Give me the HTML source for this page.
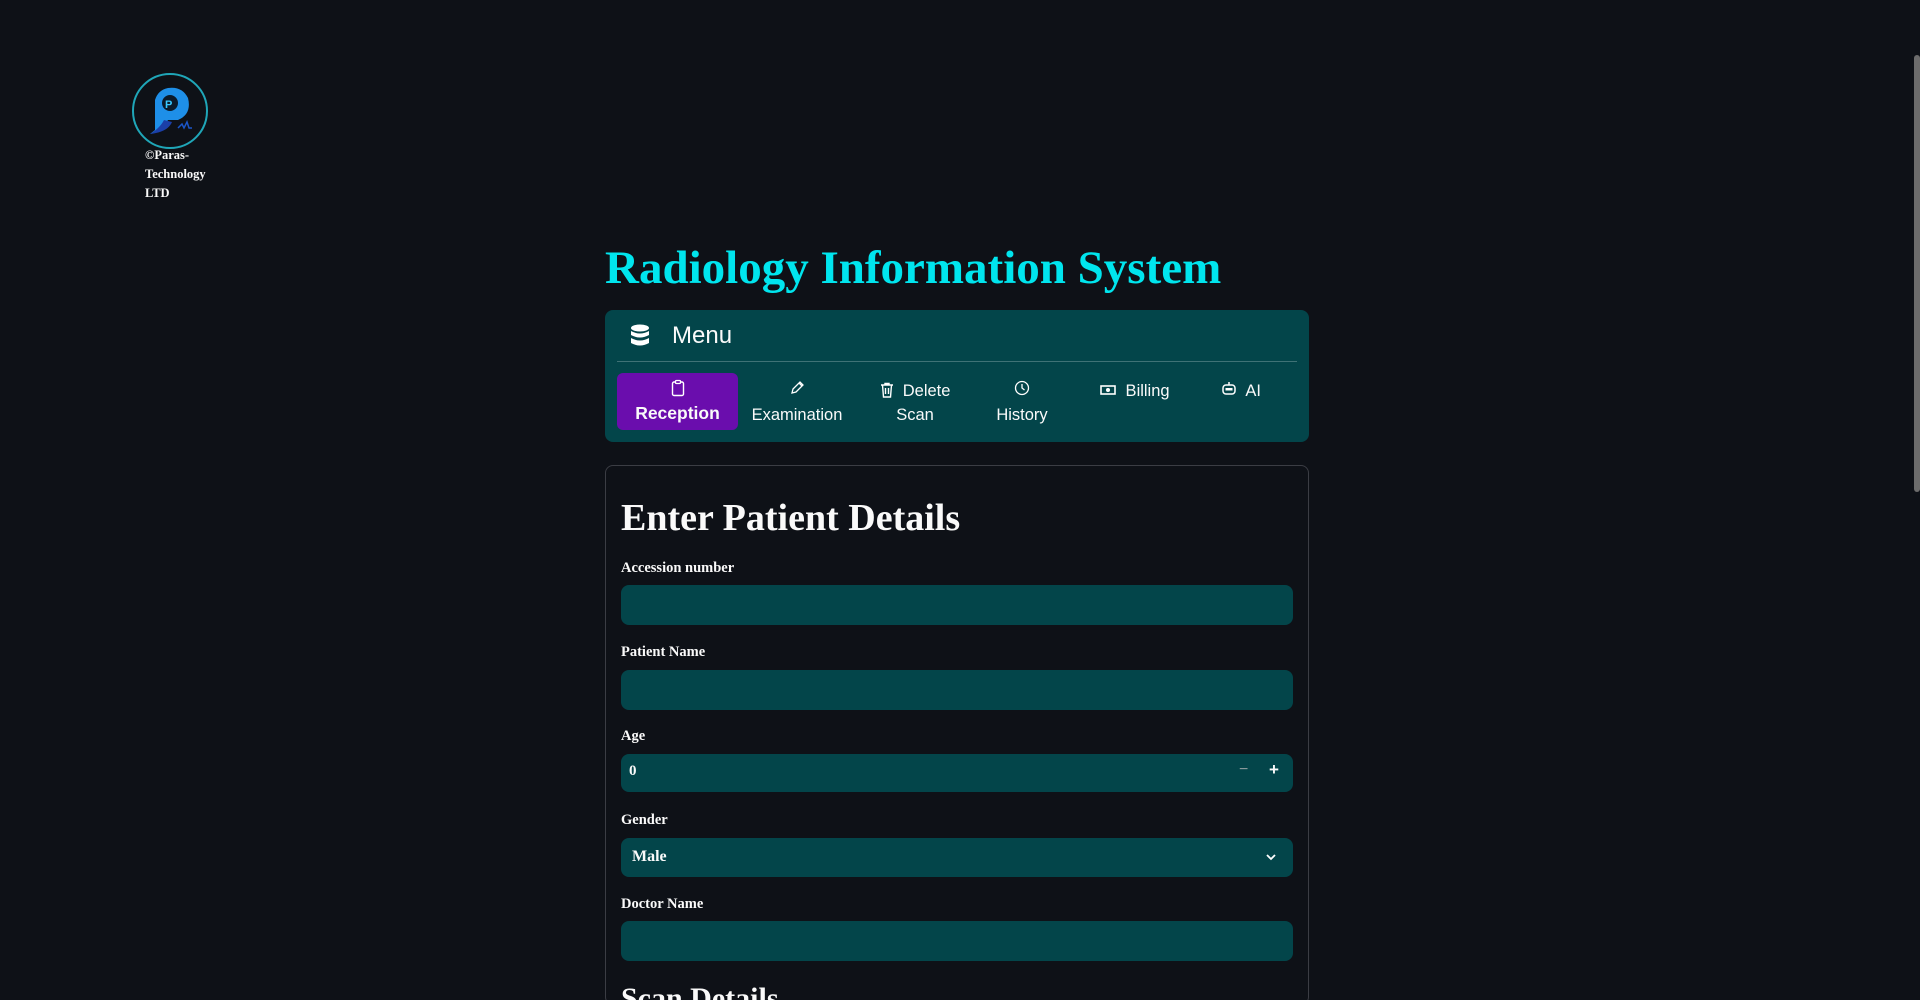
<!DOCTYPE html>
<html><head><meta charset="utf-8"><style>
*{box-sizing:border-box;margin:0;padding:0}
html,body{width:1920px;height:1000px;overflow:hidden}
body{background:#0e1117;position:relative;font-family:"Liberation Serif",serif;color:#fafafa}
.abs{position:absolute}
.logo-t{left:145px;top:146px;font-size:12.5px;font-weight:bold;line-height:19px;font-family:"Liberation Serif",serif}
h1{position:absolute;left:605px;top:241px;font-size:47px;color:#00e5ee;font-weight:bold;font-family:"Liberation Serif",serif;white-space:nowrap}
.menu{left:605px;top:310px;width:704px;height:132px;background:#03454a;border-radius:8px}
.menu .ttl{position:absolute;left:67px;top:12px;font-family:"Liberation Sans",sans-serif;font-size:24px}
.menu .div{position:absolute;left:12px;right:12px;top:51px;height:1px;background:#3f7276}
.item{position:absolute;top:63px;height:57px;text-align:center;font-family:"Liberation Sans",sans-serif;font-size:16.5px;line-height:24px}
.sel{background:#6a0dad;border-radius:6px;font-weight:bold;font-size:17.5px}
.form{left:605px;top:465px;width:704px;height:540px;border:1px solid #3b3d44;border-radius:8px}
.h2{left:621px;top:496px;font-size:38px;font-weight:bold;font-family:"Liberation Serif",serif;white-space:nowrap}
.lbl{left:621px;font-size:14.5px;font-weight:bold}
.inp{left:621px;width:672px;height:40px;background:#03454a;border-radius:8px}
</style></head><body>
<svg class="abs" style="left:128px;top:70px" width="84" height="84" viewBox="0 0 84 84">
<circle cx="42" cy="41" r="37" fill="none" stroke="#1fa6b8" stroke-width="2"/>
<path d="M22 64 Q34 60 40 50 L50 50 Q64 44 60 28 Q54 16 40 18 Q30 20 27 30 L27 60 Z" fill="#1e8fe8"/>
<path d="M22 64 Q40 62 44 52 L36 50 Q32 58 22 64Z" fill="#1b3fa8"/>
<circle cx="42" cy="33" r="8" fill="#0b1a2a"/>
<text x="37" y="38" font-size="11" font-weight="bold" fill="#38c8ff" font-family="Liberation Sans">P</text>
<path d="M50 58 l4 -4 l2 4 l3 -6 l2 6 l3 0" fill="none" stroke="#1b55c8" stroke-width="1.5"/>
</svg>
<div class="abs logo-t">©Paras-<br>Technology<br>LTD</div>
<h1>Radiology Information System</h1>
<div class="abs menu">
<svg class="abs" style="left:25px;top:14px" width="20" height="24" viewBox="0 0 20 24"><ellipse cx="10" cy="4" rx="9" ry="3.5" fill="#fff"/><path d="M1 7 Q10 12 19 7 L19 11 Q10 16 1 11Z M1 14 Q10 19 19 14 L19 19 Q10 24 1 19Z" fill="#fff"/></svg>
<div class="ttl">Menu</div>
<div class="div"></div>
<div class="item sel" style="left:12px;width:121px"><svg width="14" height="18" viewBox="0 0 14 18" style="margin-top:6px"><rect x="1.5" y="3" width="11" height="13.5" rx="1.5" fill="none" stroke="#fff" stroke-width="1.4"/><rect x="4.5" y="1.5" width="5" height="3" rx="1" fill="#6a0dad" stroke="#fff" stroke-width="1.3"/></svg><br><span style="position:relative;top:-2px">Reception</span></div>
<div class="item" style="left:135px;width:114px"><svg width="16" height="16" viewBox="0 0 16 16" style="margin-top:7px"><path d="M3 13 L4 9 L11 2 L14 5 L7 12 Z M10 3 L13 6" fill="none" stroke="#fff" stroke-width="1.3"/></svg><br><span style="position:relative;top:0px">Examination</span></div>
<div class="item" style="left:255px;width:110px;line-height:24px;padding-top:6px"><svg width="14" height="16" viewBox="0 0 14 16" style="vertical-align:-2px"><path d="M1 3H13M5 3V1.5H9V3M2.5 3L3.5 15H10.5L11.5 3M5.5 6V12M8.5 6V12" fill="none" stroke="#fff" stroke-width="1.4"/></svg>&nbsp; Delete<br>Scan</div>
<div class="item" style="left:362px;width:110px"><svg width="16" height="16" viewBox="0 0 16 16" style="margin-top:7px"><circle cx="8" cy="8" r="6.5" fill="none" stroke="#fff" stroke-width="1.3"/><path d="M8 4 V8 L10.5 10" fill="none" stroke="#fff" stroke-width="1.3"/></svg><br><span style="position:relative;top:0px">History</span></div>
<div class="item" style="left:475px;width:110px;padding-top:6px"><svg width="16" height="12" viewBox="0 0 16 12"><rect x="1" y="2" width="14" height="8" fill="none" stroke="#fff" stroke-width="1.6"/><circle cx="8" cy="6" r="2" fill="#fff"/></svg>&nbsp; Billing</div>
<div class="item" style="left:581px;width:110px;padding-top:6px"><svg width="16" height="16" viewBox="0 0 16 16"><rect x="2" y="5" width="12" height="9" rx="3" fill="none" stroke="#fff" stroke-width="1.5"/><rect x="4.5" y="8" width="7" height="2.5" fill="#fff"/><path d="M8 5V2" stroke="#fff" stroke-width="1.5"/></svg>&nbsp; AI</div>
</div>
<div class="abs form"></div>
<div class="abs h2">Enter Patient Details</div>
<div class="abs lbl" style="top:560px">Accession number</div>
<div class="abs inp" style="top:585px"></div>
<div class="abs lbl" style="top:644px">Patient Name</div>
<div class="abs inp" style="top:670px"></div>
<div class="abs lbl" style="top:728px">Age</div>
<div class="abs inp" style="top:754px;height:38px"><span class="abs" style="left:8px;top:9px;font-size:15px;font-weight:bold">0</span><span class="abs" style="left:618px;top:7px;color:#8a9a9c;font-family:Liberation Sans;font-size:16px">−</span><span class="abs" style="left:648px;top:6px;font-weight:bold;font-family:Liberation Sans;font-size:17px">+</span></div>
<div class="abs lbl" style="top:812px">Gender</div>
<div class="abs inp" style="top:838px;height:39px"><span class="abs" style="left:11px;top:10px;font-size:16px;font-weight:bold">Male</span><svg class="abs" style="left:644px;top:15px" width="12" height="8" viewBox="0 0 12 8"><path d="M2 2 L6 6 L10 2" fill="none" stroke="#fff" stroke-width="1.8"/></svg></div>
<div class="abs lbl" style="top:896px">Doctor Name</div>
<div class="abs inp" style="top:921px"></div>
<div class="abs h2" style="top:982px;font-size:30px">Scan Details</div>
<div class="abs" style="left:1914px;top:55px;width:6px;height:437px;background:#6c6c6c;border-radius:3px"></div>
</body></html>
